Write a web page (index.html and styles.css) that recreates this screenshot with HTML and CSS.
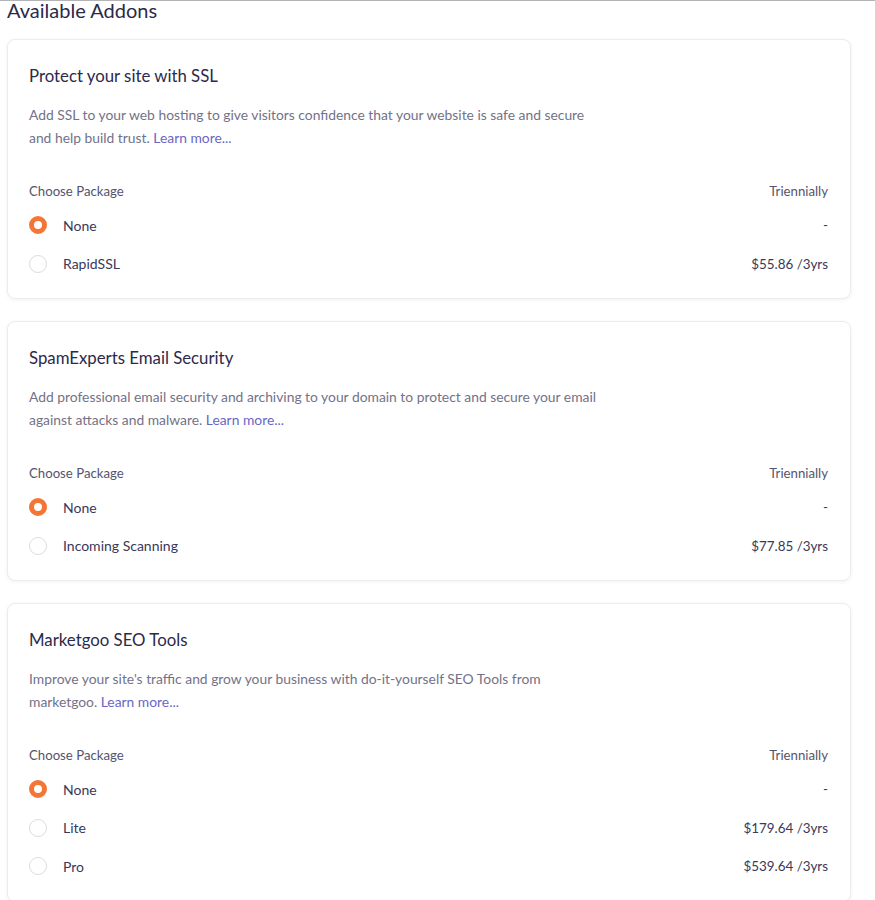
FILE: index.html
```html
<!DOCTYPE html>
<html>
<head>
<meta charset="utf-8">
<link rel="stylesheet" href="styles.css">
</head>
<body>
<div class="page">
  <h2 class="page-title">Available Addons</h2>

  <div class="card">
    <h3 class="card-title">Protect your site with SSL</h3>
    <p class="card-desc">Add SSL to your web hosting to give visitors confidence that your website is safe and secure<br>and help build trust. <a class="learn" href="#">Learn more...</a></p>
    <div class="pkg-head"><span>Choose Package</span><span>Triennially</span></div>
    <div class="opt"><span class="radio on"></span><span class="opt-name">None</span><span class="opt-price">-</span></div>
    <div class="opt"><span class="radio"></span><span class="opt-name">RapidSSL</span><span class="opt-price">$55.86 /3yrs</span></div>
  </div>

  <div class="card">
    <h3 class="card-title">SpamExperts Email Security</h3>
    <p class="card-desc">Add professional email security and archiving to your domain to protect and secure your email<br>against attacks and malware. <a class="learn" href="#">Learn more...</a></p>
    <div class="pkg-head"><span>Choose Package</span><span>Triennially</span></div>
    <div class="opt"><span class="radio on"></span><span class="opt-name">None</span><span class="opt-price">-</span></div>
    <div class="opt"><span class="radio"></span><span class="opt-name">Incoming Scanning</span><span class="opt-price">$77.85 /3yrs</span></div>
  </div>

  <div class="card">
    <h3 class="card-title">Marketgoo SEO Tools</h3>
    <p class="card-desc">Improve your site's traffic and grow your business with do-it-yourself SEO Tools from<br>marketgoo. <a class="learn" href="#">Learn more...</a></p>
    <div class="pkg-head"><span>Choose Package</span><span>Triennially</span></div>
    <div class="opt"><span class="radio on"></span><span class="opt-name">None</span><span class="opt-price">-</span></div>
    <div class="opt"><span class="radio"></span><span class="opt-name">Lite</span><span class="opt-price">$179.64 /3yrs</span></div>
    <div class="opt"><span class="radio"></span><span class="opt-name">Pro</span><span class="opt-price">$539.64 /3yrs</span></div>
  </div>
</div>
</body>
</html>
```
FILE: styles.css
```css
html, body {
  margin: 0;
  padding: 0;
  background: #ffffff;
}
body {
  font-family: Lato, "Noto Sans", sans-serif;
  color: #2e2c50;
}
.page {
  border-top: 1px solid #b4b4b8;
  padding: 0 24px 40px 7px;
}
.page-title {
  margin: 0 0 20px 0;
  padding-top: 1px;
  font-size: 20px;
  font-weight: 400;
  line-height: 17px;
  color: #2b2a4a;
}
.card {
  border: 1px solid #ececf0;
  border-radius: 8px;
  box-shadow: 0 1px 4px rgba(40, 40, 70, 0.06);
  padding: 22px 22px 15px 21px;
  margin-bottom: 22px;
  background: #fff;
}
.card-title {
  margin: 0;
  font-size: 16.8px;
  font-weight: 400;
  line-height: 27px;
  color: #2b2a4a;
}
.card-desc {
  margin: 14px 0 0 0;
  font-size: 13.85px;
  line-height: 23px;
  color: #737289;
}
.learn {
  color: #6a66c4;
  text-decoration: none;
}
.pkg-head {
  display: flex;
  justify-content: space-between;
  margin-top: 32px;
  margin-bottom: 5px;
  font-size: 13.2px;
  line-height: 20px;
  color: #55546e;
}
.opt {
  display: flex;
  align-items: center;
  height: 38.5px;
  font-size: 14px;
  color: #3a3858;
}
.opt-price {
  font-size: 13.4px;
  margin-left: auto;
}
.radio {
  box-sizing: border-box;
  width: 18px;
  height: 18px;
  border-radius: 50%;
  border: 1px solid #dcdce2;
  background: #fff;
  flex: none;
}
.radio.on {
  border: 5.5px solid #f47636;
  background: #fff;
}
.opt-name {
  margin-left: 16px;
}
```
